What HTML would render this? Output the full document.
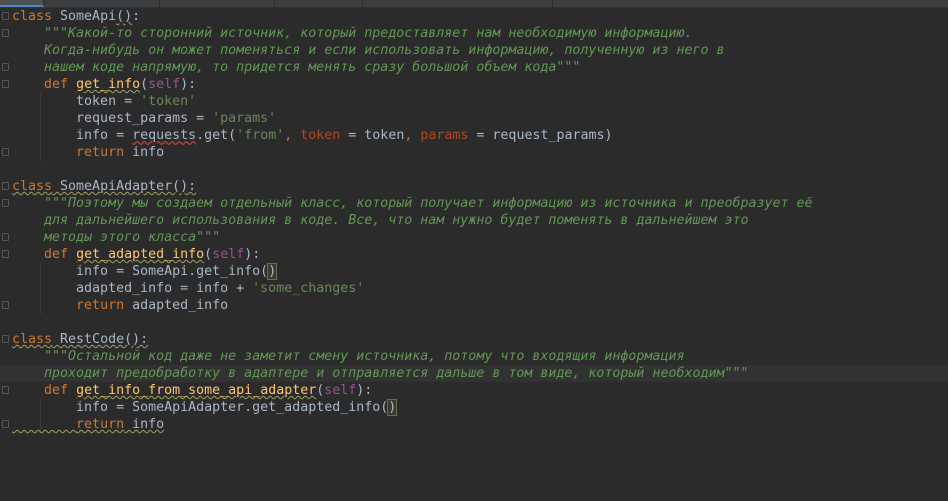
<!DOCTYPE html>
<html><head><meta charset="utf-8"><style>
body{margin:0;width:948px;height:501px;background:#2b2b2b;overflow:hidden;position:relative;font-family:"DejaVu Sans Mono","Liberation Mono","Noto Sans CJK SC",monospace;font-size:13.3px;}
.tabs{position:absolute;left:0;top:0;width:948px;height:7px;background:#3c3f41;border-bottom:1px solid #323232;}
.tab{position:absolute;top:0;height:7px;border-right:1px solid #2b2b2b;}
.l{position:absolute;left:12px;height:17px;line-height:17px;white-space:pre;color:#a9b7c6;}
.k{color:#cc7832}.d{color:#629755;font-style:italic}.s{color:#6a8759}.f{color:#ffc66d}.self{color:#94558d}.p{color:#aa4926}
.w{text-decoration:underline wavy #a0a060;text-decoration-thickness:1px}
.r{text-decoration:underline wavy #bc3f3c}
.hl{position:absolute;left:0;top:365px;width:948px;height:17px;background:#323232;}
.g{position:absolute;left:2px;width:7px;height:8px;border:1px solid #555;border-radius:1px;box-sizing:border-box}
.guide{position:absolute;width:1px;background:#393939}
.br{background:#3b3b2e;outline:1px solid #6b6b4b}
</style></head><body>
<div class="tabs">
<div class="tab" style="left:0;width:43px;background:#4e5254;border-bottom:2px solid #4a88c7;height:5px"></div>
<div class="tab" style="left:43px;width:116px"></div>
<div class="tab" style="left:160px;width:114px"></div>
<div class="tab" style="left:275px;width:87px"></div>
<div class="tab" style="left:363px;width:189px"></div>
</div>
<div class="hl"></div>
<div class="guide" style="left:40px;top:93px;height:68px"></div>
<div class="guide" style="left:40px;top:263px;height:51px"></div>
<div class="guide" style="left:40px;top:399px;height:34px"></div>
<div class="l" style="top:8px"><span class="k">class</span> SomeApi<span class="w">()</span>:</div>
<div class="l d" style="top:25px">    """Какой-то сторонний источник, который предоставляет нам необходимую информацию.</div>
<div class="l d" style="top:42px">    Когда-нибудь он может поменяться и если использовать информацию, полученную из него в</div>
<div class="l d" style="top:59px">    нашем коде напрямую, то придется менять сразу большой объем кода"""</div>
<div class="l" style="top:76px">    <span class="k">def</span> <span class="f w">get_info</span>(<span class="self">self</span>):</div>
<div class="l" style="top:93px">        token = <span class="s">'token'</span></div>
<div class="l" style="top:110px">        request_params = <span class="s">'params'</span></div>
<div class="l" style="top:127px">        info = <span class="r">requests</span>.get(<span class="s">'from'</span><span class="k">,</span> <span class="p">token</span> = token<span class="k">,</span> <span class="p">params</span> = request_params)</div>
<div class="l" style="top:144px">        <span class="k">return</span> info</div>
<div class="l" style="top:178px"><span class="k w">class</span><span class="w"> SomeApiAdapter():</span></div>
<div class="l d" style="top:195px">    """Поэтому мы создаем отдельный класс, который получает информацию из источника и преобразует её</div>
<div class="l d" style="top:212px">    для дальнейшего использования в коде. Все, что нам нужно будет поменять в дальнейшем это</div>
<div class="l d" style="top:229px">    методы этого класса"""</div>
<div class="l" style="top:246px">    <span class="k">def</span> <span class="f w">get_adapted_info</span>(<span class="self">self</span>):</div>
<div class="l" style="top:263px">        info = SomeApi.get_info(<span class="br">)</span></div>
<div class="l" style="top:280px">        adapted_info = info + <span class="s">'some_changes'</span></div>
<div class="l" style="top:297px">        <span class="k">return</span> adapted_info</div>
<div class="l" style="top:331px"><span class="k w">class</span><span class="w"> RestCode():</span></div>
<div class="l d" style="top:348px">    """Остальной код даже не заметит смену источника, потому что входящия информация</div>
<div class="l d" style="top:365px">    проходит предобработку в адаптере и отправляется дальше в том виде, который необходим"""</div>
<div class="l" style="top:382px">    <span class="k">def</span> <span class="f w">get_info_from_some_api_adapter</span>(<span class="self">self</span>):</div>
<div class="l" style="top:399px">        info = SomeApiAdapter.get_adapted_info(<span class="br">)</span></div>
<div class="l" style="top:416px"><span class="w">        <span class="k">return</span> info</span></div>
<div class="g" style="top:12px"></div><div class="g" style="top:29px"></div><div class="g" style="top:63px"></div>
<div class="g" style="top:80px"></div><div class="g" style="top:148px"></div>
<div class="g" style="top:182px"></div><div class="g" style="top:199px"></div><div class="g" style="top:233px"></div>
<div class="g" style="top:250px"></div><div class="g" style="top:301px"></div>
<div class="g" style="top:335px"></div><div class="g" style="top:386px"></div><div class="g" style="top:420px"></div>
</body></html>
